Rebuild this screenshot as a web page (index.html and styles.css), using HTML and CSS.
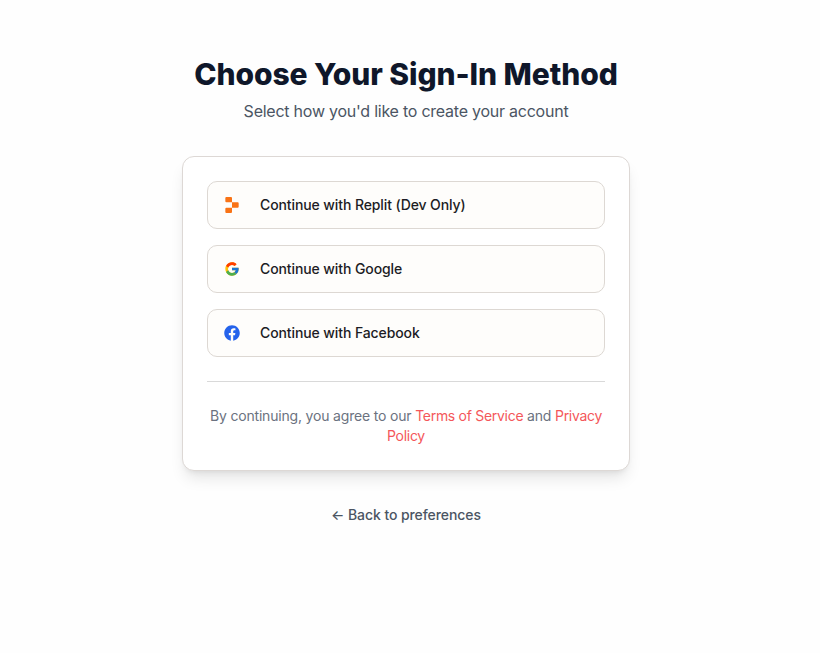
FILE: index.html
```html
<!DOCTYPE html>
<html lang="en">
<head>
<meta charset="utf-8">
<title>Choose Your Sign-In Method</title>
<link rel="stylesheet" href="styles.css">
</head>
<body>
<main class="page">
  <header class="header">
    <h1 class="title">Choose Your Sign-In Method</h1>
    <p class="subtitle">Select how you'd like to create your account</p>
  </header>
  <section class="card">
    <div class="providers">
      <button class="provider">
        <svg class="icon" viewBox="0 0 24 24" fill="#f97316"><path d="M2 1.5A1.5 1.5 0 0 1 3.5 0h7A1.5 1.5 0 0 1 12 1.5V8H3.5A1.5 1.5 0 0 1 2 6.5ZM12 8h8.5A1.5 1.5 0 0 1 22 9.5v5a1.5 1.5 0 0 1-1.5 1.5H12ZM2 17.5A1.5 1.5 0 0 1 3.5 16H12v6.5a1.5 1.5 0 0 1-1.5 1.5h-7A1.5 1.5 0 0 1 2 22.5Z"/></svg>
        <span>Continue with Replit (Dev Only)</span>
      </button>
      <button class="provider">
        <svg class="icon" viewBox="0 0 48 48"><path fill="#FFC107" d="M43.611 20.083H42V20H24v8h11.303C33.654 32.657 29.223 36 24 36c-6.627 0-12-5.373-12-12s5.373-12 12-12c3.059 0 5.842 1.154 7.961 3.039l5.657-5.657C34.046 6.053 29.268 4 24 4 12.955 4 4 12.955 4 24s8.955 20 20 20 20-8.955 20-20c0-1.341-.138-2.65-.389-3.917z"/><path fill="#FF3D00" d="M6.306 14.691l6.571 4.819C14.655 15.108 18.961 12 24 12c3.059 0 5.842 1.154 7.961 3.039l5.657-5.657C34.046 6.053 29.268 4 24 4 16.318 4 9.656 8.337 6.306 14.691z"/><path fill="#4CAF50" d="M24 44c5.166 0 9.86-1.977 13.409-5.192l-6.19-5.238C29.211 35.091 26.715 36 24 36c-5.202 0-9.619-3.317-11.283-7.946l-6.522 5.025C9.505 39.556 16.227 44 24 44z"/><path fill="#1976D2" d="M43.611 20.083H42V20H24v8h11.303a12.04 12.04 0 0 1-4.087 5.571l6.193 5.238C36.971 39.205 44 34 44 24c0-1.341-.138-2.65-.389-3.917z"/></svg>
        <span>Continue with Google</span>
      </button>
      <button class="provider">
        <svg class="icon" viewBox="0 0 512 512" fill="#2563eb"><path d="M504 256C504 119 393 8 256 8S8 119 8 256c0 123.780 90.690 226.380 209.250 245V327.690h-63V256h63v-54.640c0-62.150 37-96.480 93.670-96.480 27.140 0 55.520 4.840 55.520 4.840v61h-31.280c-30.800 0-40.410 19.120-40.410 38.730V256h68.780l-11 71.690h-57.780V501C413.310 482.380 504 379.780 504 256z"/></svg>
        <span>Continue with Facebook</span>
      </button>
    </div>
    <p class="terms">By continuing, you agree to our <a>Terms of Service</a> and <a>Privacy Policy</a></p>
  </section>
  <a class="back">← Back to preferences</a>
</main>
</body>
</html>
```
FILE: styles.css
```css
* { box-sizing: border-box; margin: 0; }
body {
  background: #fefefe;
  font-family: Inter, "Liberation Sans", sans-serif;
  color: #0f172a;
}
.page {
  width: 448px;
  margin: 56px auto 0 182px;
  text-align: center;
}
.title { font-size: 30px; line-height: 36px; font-weight: 800; letter-spacing: -0.08px; white-space: nowrap; }
.subtitle { margin-top: 7px; font-size: 16px; line-height: 24px; letter-spacing: -0.24px; color: #4b5563; }
.card {
  margin-top: 33px;
  height: 315px;
  padding: 24px;
  background: #fff;
  border: 1px solid #ddd8d5;
  border-radius: 12px;
  box-shadow: 0 10px 15px -3px rgba(0,0,0,.1), 0 4px 6px -4px rgba(0,0,0,.1);
}
.providers { display: flex; flex-direction: column; gap: 16px; }
.provider {
  display: flex;
  align-items: center;
  gap: 20px;
  height: 48px;
  padding: 0 16px;
  background: #fefdfb;
  border: 1px solid #ddd8d3;
  border-radius: 10px;
  font: 500 14px/20px Inter, sans-serif;
  letter-spacing: -0.1px;
  color: #1c1c24;
}
.icon { width: 16px; height: 16px; }
.terms {
  margin-top: 24px;
  padding-top: 24px;
  border-top: 1px solid #d9d9d9;
  font-size: 14px;
  line-height: 20px;
  letter-spacing: -0.18px;
  color: #6b7280;
}
.terms a { color: #f4575a; letter-spacing: -0.29px; }
.back {
  display: block;
  margin-top: 34px;
  font-size: 14px;
  line-height: 20px;
  font-weight: 500;
  letter-spacing: -0.08px;
  color: #4b5563;
}
```
